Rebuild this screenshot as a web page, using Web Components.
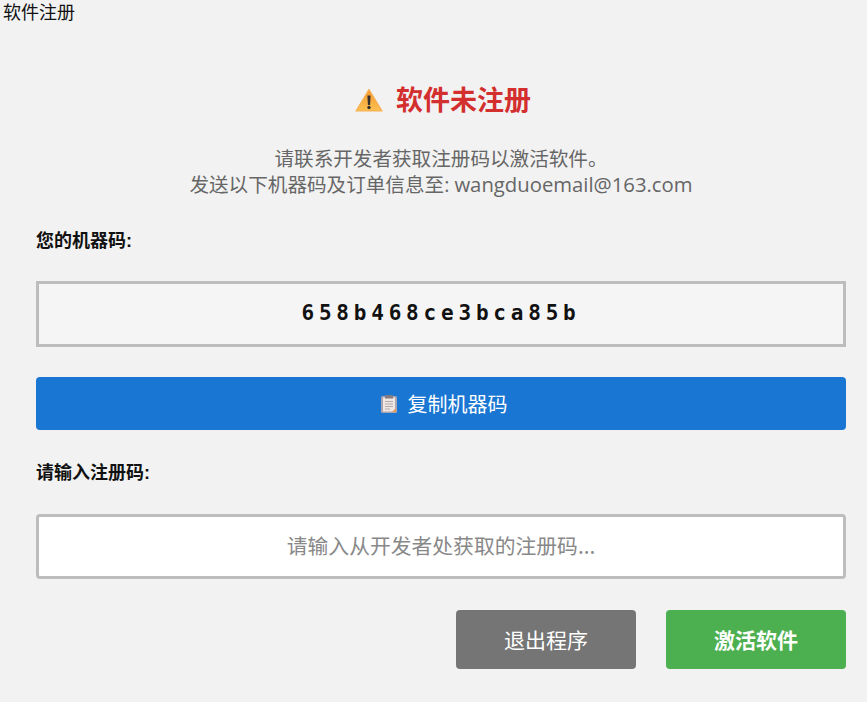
<!DOCTYPE html>
<html lang="zh">
<head>
<meta charset="utf-8">
<title>软件注册</title>
<style>
    html, body { margin: 0; height: 100%; background: #f2f2f2; }
    body { font-family: "Open Sans", "Noto Sans CJK SC", sans-serif; color: #111; }
</style>
</head>
<body>
<register-window>
    <warning-heading>软件未注册</warning-heading>
    <intro-text>请联系开发者获取注册码以激活软件。<br>发送以下机器码及订单信息至: <span>wangduoemail@163.com</span></intro-text>
    <field-label>您的机器码:</field-label>
    <machine-code>658b468ce3bca85b</machine-code>
    <action-button kind="primary" icon="clipboard">复制机器码</action-button>
    <field-label>请输入注册码:</field-label>
    <code-input placeholder="请输入从开发者处获取的注册码..."></code-input>
    <div slot="actions">
        <action-button kind="muted" wide>退出程序</action-button>
        <action-button kind="success" wide>激活软件</action-button>
    </div>
</register-window>

<script>
const CJK = '"Noto Sans CJK SC", sans-serif';

class RegisterWindow extends HTMLElement {
    constructor() {
        super();
        this.shadowDOM = this.attachShadow({ mode: 'open' });
        this.shadowDOM.innerHTML = `
            <style>
                :host { display: block; height: 702px; box-sizing: border-box; overflow: hidden; background: #f2f2f2; }
                .title { font: 18px/22px "Liberation Sans", ${CJK}; color: #111; padding: 2px 0 0 3px; height: 24px; box-sizing: border-box; }
                .content { padding: 59px 21px 0 36px; }
                ::slotted(intro-text) { margin-top: 31px; }
                ::slotted(field-label) { margin-top: 31px; }
                ::slotted(machine-code) { margin-top: 28px; }
                ::slotted(action-button) { margin-top: 30px; }
                ::slotted(code-input) { margin-top: 29px; }
                ::slotted([slot="actions"]) { margin-top: 31px; display: flex; justify-content: flex-end; gap: 30px; }
            </style>
            <div class="title">软件注册</div>
            <div class="content">
                <slot></slot>
                <slot name="actions"></slot>
            </div>
        `;
    }
}

class WarningHeading extends HTMLElement {
    constructor() {
        super();
        this.shadowDOM = this.attachShadow({ mode: 'open' });
        this.shadowDOM.innerHTML = `
            <style>
                :host { display: flex; justify-content: center; align-items: center; gap: 13px; height: 32px; font: bold 27px/32px ${CJK}; color: #d32f2f; padding-left: 4px; }
                svg { width: 28px; height: 24px; margin-top: 1px; }
            </style>
            <svg viewBox="0 0 28 24">
                <defs><linearGradient id="g" x1="0" y1="0" x2="0" y2="1">
                    <stop offset="0" stop-color="#f79a2e"/><stop offset="1" stop-color="#fcc052"/>
                </linearGradient></defs>
                <path d="M14 1.5 L27 23 H1 Z" fill="url(#g)" stroke="#f6ae52" stroke-width="1.2" stroke-linejoin="round"/>
                <path d="M12.4 7.5 h3.2 l-.5 9.5 h-2.2 Z" fill="#35302c"/>
                <circle cx="14" cy="19.5" r="1.7" fill="#35302c"/>
            </svg>
            <slot></slot>
        `;
    }
}

class IntroText extends HTMLElement {
    constructor() {
        super();
        this.shadowDOM = this.attachShadow({ mode: 'open' });
        this.shadowDOM.innerHTML = `
            <style>
                :host { display: block; font: 19.6px/26px "Open Sans", ${CJK}; color: #666; text-align: center; }
                ::slotted(span) { font-size: 20.3px; line-height: 1; }
            </style>
            <slot></slot>
        `;
    }
}

class FieldLabel extends HTMLElement {
    constructor() {
        super();
        this.shadowDOM = this.attachShadow({ mode: 'open' });
        this.shadowDOM.innerHTML = `
            <style>
                :host { display: block; font: bold 18px/24px "Liberation Sans", ${CJK}; color: #111; }
            </style>
            <slot></slot>
        `;
    }
}

class MachineCode extends HTMLElement {
    constructor() {
        super();
        this.shadowDOM = this.attachShadow({ mode: 'open' });
        this.shadowDOM.innerHTML = `
            <style>
                :host { display: flex; align-items: center; justify-content: center; box-sizing: border-box; height: 66px;
                    border: 3px solid #bdbdbd; background: #f5f5f5; color: #111; padding-bottom: 2px;
                    font: bold 21px "DejaVu Sans Mono", monospace; letter-spacing: 4.8px; }
            </style>
            <slot></slot>
        `;
    }
}

class ActionButton extends HTMLElement {
    constructor() {
        super();
        this.shadowDOM = this.attachShadow({ mode: 'open' });
        const clipboard = this.getAttribute('icon') === 'clipboard' ? `
            <svg viewBox="0 0 16 18" width="16" height="18" style="margin-left:6px">
                <rect x="0" y="1" width="16" height="17" rx="1.5" fill="#ada4b2"/>
                <rect x="2" y="2.5" width="12" height="14" fill="#efe7e2"/>
                <rect x="4" y="0" width="8" height="3.5" rx="0.5" fill="#827c84"/>
                <path d="M4 6.5h8M4 9h8M4 11.5h8M4 14h5" stroke="#b3abaf" stroke-width="1"/>
                <path d="M11 17 L15 13 V17 Z" fill="#e49a5a"/>
            </svg>` : '';
        this.shadowDOM.innerHTML = `
            <style>
                :host { display: flex; align-items: center; justify-content: center; gap: 11px; box-sizing: border-box;
                    height: 53px; border-radius: 4px; color: #fff; font: 20px/28px ${CJK}; background: #1976d2; cursor: pointer; }
                :host([wide]) { width: 180px; height: 59px; font-size: 21px; padding-bottom: 1px; }
                :host([kind="muted"]) { background: #757575; }
                :host([kind="success"]) { background: #4caf50; font-weight: bold; }
            </style>
            ${clipboard}
            <slot></slot>
        `;
    }
}

class CodeInput extends HTMLElement {
    constructor() {
        super();
        this.shadowDOM = this.attachShadow({ mode: 'open' });
        this.shadowDOM.innerHTML = `
            <style>
                :host { display: block; }
                input { display: block; width: 100%; height: 65px; box-sizing: border-box; border: 3px solid #bdbdbd; border-radius: 4px;
                    background: #fff; text-align: center; font: 20.8px ${CJK}; outline: none; padding: 0 10px 4px; }
                input::placeholder { color: #888; opacity: 1; }
            </style>
            <input type="text" placeholder="${this.getAttribute('placeholder')}">
        `;
    }
}

customElements.define('register-window', RegisterWindow);
customElements.define('warning-heading', WarningHeading);
customElements.define('intro-text', IntroText);
customElements.define('field-label', FieldLabel);
customElements.define('machine-code', MachineCode);
customElements.define('action-button', ActionButton);
customElements.define('code-input', CodeInput);
</script>
</body>
</html>
